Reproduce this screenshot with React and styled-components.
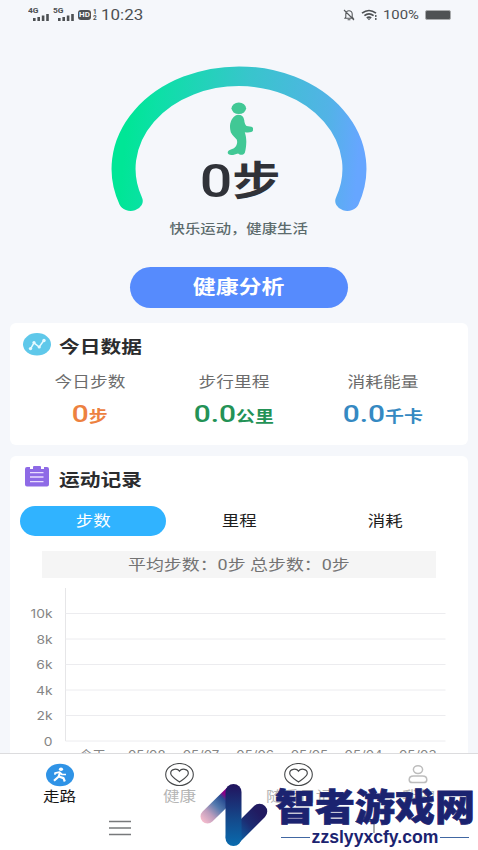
import styled, {createGlobalStyle} from "styled-components";
import {Component} from "react";

const days = ['今天', '05/08', '05/07', '05/06', '05/05', '05/04', '05/03'];
const ticks = ['10k', '8k', '6k', '4k', '2k', '0'];

const metrics = [
    {label: '今日步数', value: '0', unit: '步', color: '#ed8140', width: 71},
    {label: '步行里程', value: '0.0', unit: '公里', color: '#239256', width: 80},
    {label: '消耗能量', value: '0.0', unit: '千卡', color: '#3589c2', width: 81}
];

const SignalIcon = () => (
    <svg width="17" height="8" viewBox="0 0 17 8" fill="#4d5053">
        <rect x="0" y="5" width="2.6" height="3"/>
        <rect x="4.4" y="4" width="2.6" height="4"/>
        <rect x="8.8" y="2.5" width="2.6" height="5.5"/>
        <rect x="13.2" y="1" width="2.6" height="7"/>
    </svg>
)

const MuteIcon = () => (
    <svg width="12" height="12" viewBox="0 0 12 12" fill="none" stroke="#55585b" strokeWidth="1.1">
        <path d="M2 9.2h8.2L9.2 8V5a3.2 3.2 0 0 0-6.4 0v3zM4.6 10.7h2.8M1 1l10 10"/>
    </svg>
)

const WifiIcon = () => (
    <svg width="18" height="12" viewBox="0 0 18 12" fill="none" stroke="#4d5053" strokeWidth="1.7">
        <path d="M1 4.2Q8 -1.2 15 4.2M3.4 6.7Q8 3 12.6 6.7M5.8 9Q8 7.2 10.2 9"/>
        <path d="M6.4 9.4h3.2L8 11.2z" fill="#4d5053" stroke="none"/>
        <path d="M14.8 6v2M14.8 9v2" strokeWidth="1.4"/>
    </svg>
)

const WalkerIcon = () => (
    <svg width="27" height="54" viewBox="0 0 27 54" fill="#41c895">
        <ellipse cx="12.8" cy="6.3" rx="7.3" ry="5.8"/>
        <path d="M12 12.8c3.7 0 5.7 1.7 6.2 5.2.3 2.7.9 4.9 2.4 6l4.8.7c2.6 1 2.5 4.5-.2 5.400-1.800.5-4.300.5-6.400.1.8 2.900 1.600 5.500 1.500 9.800-.1 4.500-.6 7.400-1.400 10.500-1 2.900-5 3-6.800.9-2.500.9-4.200 1.500-6.700 1.600-3.500-.1-4.800-2.500-2.600-4.500 1.600-1.100 5-1.500 6.700-3.800 1.500-2 2.200-4.800 1.200-7.100-1-2-4.600-3.900-5.900-7.400C3.700 26 3.600 22.600 5 19.200c1.300-3 3.500-6 7-6.400z"/>
    </svg>
)

const TrendIcon = () => (
    <svg width="28" height="23" viewBox="0 0 28 23">
        <ellipse cx="14" cy="11.3" rx="14" ry="11.2" fill="#5fc8ea"/>
        <path d="M7.5 15.8L11 9.8L16.2 14L21 7.3" fill="none" stroke="#e6faff" strokeWidth="1.5"/>
        <g fill="#e6faff">
            <circle cx="7.5" cy="15.6" r="1.7"/>
            <circle cx="11" cy="9.6" r="1.6"/>
            <circle cx="16.2" cy="14" r="1.6"/>
            <circle cx="21" cy="7.5" r="1.7"/>
        </g>
    </svg>
)

const ClipboardIcon = () => (
    <svg width="24" height="21" viewBox="0 0 24 21">
        <path d="M2 1h3v2h3V1h8v2h3V1h3q2 0 2 2v15.5q0 2-2 2H2q-2 0-2-2V3q0-2 2-2z" fill="#8e6ae6"/>
        <rect x="8" y="0" width="8" height="2.3" rx="1" fill="#8e6ae6"/>
        <path d="M5 6.6h13.5M5 11h13.5M5 15.6h13.5" stroke="#e9dcff" strokeWidth="1.3"/>
    </svg>
)

const RunIcon = () => (
    <svg width="28" height="23" viewBox="0 0 28 23">
        <ellipse cx="14" cy="11.5" rx="14" ry="11.3" fill="#2f93e6"/>
        <ellipse cx="15" cy="5.7" rx="2.1" ry="1.7" fill="#fff"/>
        <path d="M9 11.3V9.7L13.5 8.7L16 11H20" fill="none" stroke="#fff" strokeWidth="1.7" strokeLinejoin="round"/>
        <path d="M14 9.5L12.5 13.3L8 17.3M12.8 13L17.5 14.6L18.8 18" fill="none" stroke="#fff" strokeWidth="2.2" strokeLinejoin="round"/>
    </svg>
)

const HeartIcon = () => (
    <svg width="29" height="24" viewBox="0 0 29 24" fill="none" stroke="#47494b">
        <ellipse cx="14.5" cy="11.5" rx="13.8" ry="11" strokeWidth="1.1"/>
        <path d="M14.5 8.1C12.3 5 5.7 5.8 5.7 10.2C5.7 13.5 11.5 16.8 14.5 18.9C17.5 16.8 23.3 13.5 23.3 10.2C23.3 5.8 16.7 5 14.5 8.1z" strokeWidth="1.2"/>
    </svg>
)

const PersonIcon = () => (
    <svg width="20" height="20" viewBox="0 0 20 20" fill="none" stroke="#bdbdbd" strokeWidth="1.5">
        <ellipse cx="10" cy="4.6" rx="4.6" ry="3.9"/>
        <path d="M5.5 11h9q4.3 0 4.3 3.700q0 2.900-3 2.900h-11.600q-3 0-3-2.900q0-3.700 4.300-3.700z"/>
    </svg>
)

const Chart = () => (
    <svg width="458" height="173" viewBox="0 0 458 173">
        <path d="M55.5 8V161" stroke="#e6e6e8"/>
        {ticks.map((tick, i) => (
            <g key={tick}>
                <path d={`M55.5 ${33.5 + i * 25.5}H435.5`} stroke="#ececef"/>
                <AxisText transform={`translate(42.5 ${38 + i * 25.5}) scale(1.2 1)`} textAnchor="end">{tick}</AxisText>
            </g>
        ))}
        {days.map((day, i) => (
            <AxisText key={day} transform={`translate(${82.6 + i * 54.2} 179) scale(1.15 1)`} textAnchor="middle">{day}</AxisText>
        ))}
    </svg>
)

export default class App extends Component {
    render() {
        return (
            <Screen>
                <GlobalStyle/>
                <StatusBar>
                    <StatusGroup>
                        <Signal><NetType>4G</NetType><SignalIcon/></Signal>
                        <Signal><NetType>5G</NetType><SignalIcon/></Signal>
                        <HdBadge>HD</HdBadge>
                        <SimNumbers><span>1</span><span>2</span></SimNumbers>
                        <Clock>10:23</Clock>
                    </StatusGroup>
                    <StatusGroup>
                        <MuteIcon/>
                        <WifiWrap><WifiIcon/></WifiWrap>
                        <Percent>100%</Percent>
                        <Battery/>
                    </StatusGroup>
                </StatusBar>

                <Gauge>
                    <GaugeArc viewBox="0 0 210 150" preserveAspectRatio="none">
                        <defs>
                            <linearGradient id="arc" gradientUnits="userSpaceOnUse" x1="8" y1="120" x2="200" y2="135">
                                <stop offset="0" stopColor="#00e696"/>
                                <stop offset="0.12" stopColor="#0ce0a6"/>
                                <stop offset="0.5" stopColor="#38c5cc"/>
                                <stop offset="0.85" stopColor="#52b3e6"/>
                                <stop offset="1" stopColor="#66a6ff"/>
                            </linearGradient>
                        </defs>
                        <path d="M16.2 137A94.7 92.6 0 1 1 193.8 137" fill="none" stroke="url(#arc)" strokeWidth="19.7" strokeLinecap="round"/>
                    </GaugeArc>
                    <GaugeBody>
                        <WalkerIcon/>
                        <StepCount><span>0</span>步</StepCount>
                        <Slogan>快乐运动，健康生活</Slogan>
                    </GaugeBody>
                </Gauge>
                <AnalyseButton><Wide>健康分析</Wide></AnalyseButton>

                <TodayCard>
                    <CardHead><TrendIcon/><CardTitle>今日数据</CardTitle></CardHead>
                    <Metrics>
                        {metrics.map((m) => (
                            <Metric key={m.label} $width={m.width}>
                                <MetricLabel>{m.label}</MetricLabel>
                                <MetricValue $color={m.color}><b>{m.value}</b>{m.unit}</MetricValue>
                            </Metric>
                        ))}
                    </Metrics>
                </TodayCard>

                <RecordCard>
                    <CardHead><ClipboardIcon/><CardTitle>运动记录</CardTitle></CardHead>
                    <Tabs>
                        <Tab $active><Wide>步数</Wide></Tab>
                        <Tab><Wide>里程</Wide></Tab>
                        <Tab><Wide>消耗</Wide></Tab>
                    </Tabs>
                    <Summary><Wide>平均步数：0步 总步数：0步</Wide></Summary>
                    <Chart/>
                </RecordCard>

                <TabBar>
                    <NavItem $active><RunIcon/><Wide>走路</Wide></NavItem>
                    <NavItem><HeartIcon/><Wide>健康</Wide></NavItem>
                    <NavItem><HeartIcon/><Wide>随手日记</Wide></NavItem>
                    <NavItem><PersonIcon/><Wide>我的</Wide></NavItem>
                </TabBar>
                <SystemBar>
                    <svg width="22" height="16" viewBox="0 0 22 16" stroke="#77797b" strokeWidth="1.3"><path d="M0 1.5H22M0 8H22M0 14.5H22"/></svg>
                    <svg width="28" height="16" viewBox="0 0 28 16" stroke="#77797b"><path d="M0 6H12"/></svg>
                    <svg width="22" height="16" viewBox="0 0 22 16" fill="none" stroke="#77797b" strokeWidth="1.2"><path d="M1 1.5H17Q20 1.5 20 4.5V13"/></svg>
                </SystemBar>

                <Watermark>
                    <svg width="70" height="66" viewBox="0 0 70 66" fill="none" strokeLinecap="round">
                        <defs>
                            <linearGradient id="wmLeft" gradientUnits="userSpaceOnUse" x1="5" y1="40" x2="35" y2="10">
                                <stop offset="0" stopColor="#f6bccd"/>
                                <stop offset="0.25" stopColor="#bd9dbd"/>
                                <stop offset="0.5" stopColor="#5279ae"/>
                                <stop offset="0.72" stopColor="#294c92"/>
                                <stop offset="0.82" stopColor="#8b0087"/>
                            </linearGradient>
                            <linearGradient id="wmMid" gradientUnits="userSpaceOnUse" x1="0" y1="4" x2="0" y2="64">
                                <stop offset="0" stopColor="#211660"/>
                                <stop offset="0.55" stopColor="#14498b"/>
                                <stop offset="1" stopColor="#096bae"/>
                            </linearGradient>
                            <linearGradient id="wmRight" gradientUnits="userSpaceOnUse" x1="34" y1="56" x2="60" y2="30">
                                <stop offset="0" stopColor="#096bae"/>
                                <stop offset="0.6" stopColor="#1c2c72"/>
                                <stop offset="1" stopColor="#211b61"/>
                            </linearGradient>
                        </defs>
                        <path d="M9.5 34.500L34 10.500" stroke="url(#wmLeft)" strokeWidth="14"/>
                        <path d="M35.5 55.500L61.500 29.500" stroke="url(#wmRight)" strokeWidth="15.500"/>
                        <path d="M27.5 10a8 8 0 0 1 16 0v46a8 8 0 0 1-16 0z" fill="url(#wmMid)"/>
                    </svg>
                    <WatermarkText>
                        <WatermarkName>智者游戏网</WatermarkName>
                        <WatermarkSite>zzslyyxcfy.com</WatermarkSite>
                    </WatermarkText>
                </Watermark>
            </Screen>
        )
    }
}

const GlobalStyle = createGlobalStyle`
  body {
    margin: 0;
    background: #f5f7fb;
    font-family: Roboto, "Noto Sans CJK SC", sans-serif;
  }

  * {
    box-sizing: border-box;
  }

  svg {
    display: block;
    flex: none;
  }
`

const Screen = styled.div`
  position: relative;
  display: flex;
  flex-direction: column;
  width: 478px;
  height: 850px;
  overflow: hidden;
  background: #f5f7fb;
`

const Wide = styled.span`
  display: inline-block;
  white-space: nowrap;
  transform: scaleX(1.22);
`

const StatusBar = styled.div`
  display: flex;
  justify-content: space-between;
  height: 30px;
  padding: 0 25px 0 28px;
`

const StatusGroup = styled.div`
  display: flex;
  align-items: center;
  height: 30px;
`

const Signal = styled.div`
  display: flex;
  flex-direction: column;
  width: 25px;
  height: 12px;
  margin-top: -2px;

  svg {
    margin: -2px 0 0 5px;
  }
`

const NetType = styled.span`
  font: bold 7px/7px Roboto, sans-serif;
  color: #4d5053;
  transform: scaleX(1.2);
  transform-origin: left;
`

const HdBadge = styled.span`
  width: 13px;
  height: 10px;
  border-radius: 3px;
  background: #4d5053;
  color: #f5f7fb;
  font: bold 8px/10px Roboto, sans-serif;
  text-align: center;
`

const SimNumbers = styled.span`
  display: flex;
  flex-direction: column;
  width: 10px;
  padding-left: 2px;
  font: bold 6.5px/6px Roboto, sans-serif;
  color: #4d5053;
`

const Clock = styled.span`
  font-size: 14.5px;
  color: #4d5053;
  transform: scaleX(1.17);
  transform-origin: left;
`

const WifiWrap = styled.div`
  margin: 0 4px 0 6px;
`

const Percent = styled.span`
  width: 42px;
  font-size: 12px;
  color: #4d5053;
  transform: scaleX(1.24);
  transform-origin: left;
`

const Battery = styled.div`
  width: 26px;
  height: 10px;
  margin-right: 2px;
  border: 1px solid #a9abad;
  border-radius: 2px;
  background: #4f5254;
`

const Gauge = styled.div`
  position: relative;
  height: 237px;
`

const GaugeArc = styled.svg`
  position: absolute;
  left: 111px;
  top: 34px;
  width: 256px;
  height: 150px;
`

const GaugeBody = styled.div`
  display: flex;
  flex-direction: column;
  align-items: center;
  padding-top: 72px;
`

const StepCount = styled.div`
  display: flex;
  align-items: baseline;
  margin: -6px 0 0 3px;
  font-size: 39.5px;
  font-weight: bold;
  line-height: 58px;
  color: #303238;
  transform: scaleX(1.22);

  span {
    font-size: 47px;
    font-weight: 500;
    transform: translateY(2px);
  }
`

const Slogan = styled.div`
  margin-top: 8px;
  font-size: 12.6px;
  font-weight: 500;
  line-height: 19px;
  color: #5c6b6c;
  transform: scaleX(1.22);
`

const AnalyseButton = styled.button`
  align-self: center;
  flex: none;
  width: 218px;
  height: 41px;
  padding: 2px 0 0;
  border: 0;
  border-radius: 21px;
  background: #568bfd;
  color: #fff;
  font: bold 18.8px/39px Roboto, "Noto Sans CJK SC", sans-serif;
`

const Card = styled.section`
  flex: none;
  margin: 0 10px;
  border-radius: 6px;
  background: #fff;
`

const TodayCard = styled(Card)`
  height: 122px;
  margin-top: 15px;
`

const RecordCard = styled(Card)`
  height: 297px;
  margin-top: 11px;
  border-radius: 6px 6px 0 0;
  overflow: hidden;
`

const CardHead = styled.div`
  display: flex;
  height: 50px;
  padding: 10px 0 0 13px;

  > svg {
    width: 28px;
  }
`

const CardTitle = styled.h2`
  margin: 2px 0 0 8px;
  font-size: 17px;
  font-weight: bold;
  line-height: 25px;
  color: #2b2c2e;
  transform: scaleX(1.22);
  transform-origin: left;
`

const Metrics = styled.div`
  display: flex;
  justify-content: space-between;
  padding: 0 45px 0 44px;
`

const Metric = styled.div`
  display: flex;
  flex-direction: column;
  align-items: center;
  width: ${props => props.$width}px;
`

const MetricLabel = styled.div`
  font-size: 14.5px;
  line-height: 20px;
  color: #6c6c6c;
  white-space: nowrap;
  transform: scaleX(1.22);
`

const MetricValue = styled.div`
  margin-top: 5px;
  font-size: 15.5px;
  font-weight: bold;
  line-height: 32px;
  white-space: nowrap;
  color: ${props => props.$color};
  transform: scaleX(1.22);

  b {
    font-size: 24.5px;
    font-weight: 500;
  }
`

const Tabs = styled.div`
  display: flex;
  padding: 0 10px;
`

const Tab = styled.div`
  flex: 1;
  height: 30px;
  border-radius: 15px;
  background: ${props => props.$active ? '#30b3ff' : 'transparent'};
  color: ${props => props.$active ? '#fff' : '#1d1d1d'};
  font-size: 14.3px;
  line-height: 31px;
  text-align: center;
`

const Summary = styled.div`
  height: 27px;
  margin: 15px 32px 2px;
  background: #f5f5f5;
  color: #737373;
  font-size: 14.7px;
  line-height: 28px;
  text-align: center;
`

const AxisText = styled.text`
  font: 11.5px Inter, "Noto Sans CJK SC", sans-serif;
  fill: #858585;
`

const TabBar = styled.nav`
  display: flex;
  flex: none;
  height: 54px;
  border-top: 1px solid #dcdcde;
  background: #fff;
`

const NavItem = styled.div`
  display: flex;
  flex: 1;
  flex-direction: column;
  align-items: center;
  padding-top: 9px;
  color: ${props => props.$active ? '#151515' : '#b5b5b5'};
  font-size: 13.6px;
  line-height: 18px;

  svg {
    height: 24px;
  }
`

const SystemBar = styled.div`
  display: flex;
  justify-content: space-between;
  height: 43px;
  padding: 13px 102px 0 109px;
  background: #fff;
`

const Watermark = styled.div`
  position: absolute;
  left: 198px;
  top: 782px;
  display: flex;
  width: 280px;
  height: 68px;
`

const WatermarkText = styled.div`
  display: flex;
  flex-direction: column;
  align-items: center;
  width: 200px;
  margin-left: 7px;
  color: #1b2370;
`

const WatermarkName = styled.div`
  font-family: "Noto Sans CJK SC", sans-serif;
  font-size: 40px;
  font-weight: 900;
  line-height: 46px;
  white-space: nowrap;
  transform: scaleY(0.93);
  -webkit-text-stroke: 0.8px #1b2370;
`

const WatermarkSite = styled.div`
  display: flex;
  align-items: center;
  gap: 2px;
  font: bold 17.6px/18px "Liberation Sans", Arial, sans-serif;

  &::before,
  &::after {
    content: "";
    width: 29px;
    height: 1px;
    background: #4167a2;
  }
`
